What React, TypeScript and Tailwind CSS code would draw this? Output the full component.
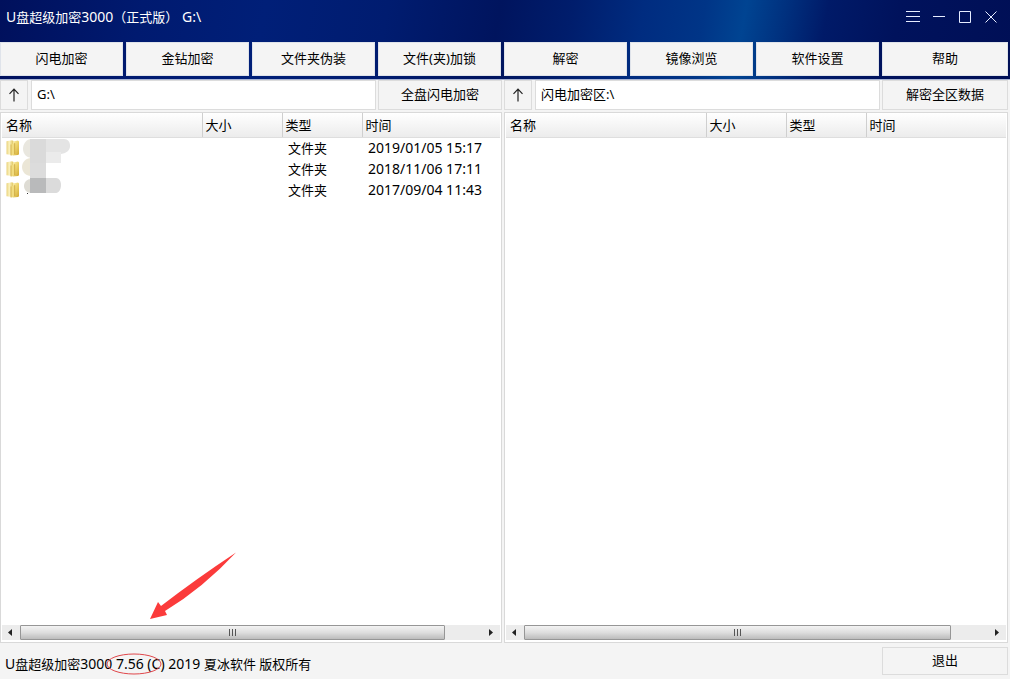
import type { ReactNode } from "react";

const tabs = ["闪电加密", "金钻加密", "文件夹伪装", "文件(夹)加锁", "解密", "镜像浏览", "软件设置", "帮助"];

const columns = ["名称", "大小", "类型", "时间"];

type FileRow = { id: number; type: string; time: string };

const files: FileRow[] = [
  { id: 1, type: "文件夹", time: "2019/01/05 15:17" },
  { id: 2, type: "文件夹", time: "2018/11/06 17:11" },
  { id: 3, type: "文件夹", time: "2017/09/04 11:43" },
];

function Latin({ children }: { children: ReactNode }) {
  return <span className="text-[14px]">{children}</span>;
}

function FolderIcon() {
  return (
    <svg width="14" height="16" viewBox="0 0 14 16" className="block" aria-hidden="true">
      <defs>
        <linearGradient id="folderBack" x1="0" x2="1" y1="0" y2="0">
          <stop offset="0" stopColor="#e9d27a" />
          <stop offset="0.4" stopColor="#fbf2bd" />
          <stop offset="1" stopColor="#dfc35a" />
        </linearGradient>
        <linearGradient id="folderFront" x1="0" x2="1" y1="0" y2="1">
          <stop offset="0" stopColor="#fbf0b0" />
          <stop offset="0.5" stopColor="#ecd268" />
          <stop offset="1" stopColor="#cfa632" />
        </linearGradient>
      </defs>
      <path d="M0.500 1.200 6 0.300 7.500 1v13l-1.500 1-5.500-.8z" fill="url(#folderBack)" />
      <path d="M7 1.500 12 0.600l1 .9v12.700l-1 .9-5.500.4z" fill="url(#folderFront)" />
      <path d="M5 4.500 8.500 3.200V14.200L5 15.600z" fill="#f1dc80" />
      <path d="M5 4.500v11" stroke="#c9a53c" strokeWidth="0.7" />
      <path d="M8.700 3.200v11" stroke="#c29a30" strokeWidth="0.7" />
    </svg>
  );
}

function NameMosaic() {
  return (
    <svg
      width="48"
      height="58"
      viewBox="0 0 48 58"
      className="pointer-events-none absolute top-[25px] left-5"
      aria-hidden="true"
    >
      <path d="M10 1C4 1 1 6 1 11s4 9 9 9z" fill="#e9e7df" />
      <path d="M9 20C4 20 0 24 0 29s4 9 9 9z" fill="#ebe6d6" />
      <path d="M9 41c-4 0-7 3-7 7s3 7 7 7z" fill="#dedcd4" />
      <rect x="8" y="1" width="16" height="24" fill="#dadada" />
      <path d="M24 1h18c4 0 6 3 6 7s-3 7-9 8H24z" fill="#e4e4e4" />
      <path d="M24 14h15v11H24z" fill="#ebebeb" />
      <rect x="8" y="25" width="16" height="16" fill="#dcdcdc" />
      <rect x="8" y="40" width="16" height="15" fill="#b9babb" />
      <path d="M24 40h10c3 0 5 3 5 7s-2 8-5 8H24z" fill="#dbdbdb" />
      <rect x="5" y="55" width="1" height="1" fill="#333" />
    </svg>
  );
}

function UpIcon() {
  return (
    <svg width="12" height="14" viewBox="0 0 12 14" fill="none" stroke="#222" strokeWidth="1.2" aria-hidden="true">
      <path d="M6 13.5V1.2M1.5 5.8 6 1.2l4.5 4.6" />
    </svg>
  );
}

function ScrollBar() {
  return (
    <div className="flex h-[15px] bg-[#ececec]">
      <button type="button" aria-label="向左滚动" className="flex w-[18px] items-center justify-center pr-[2px]">
        <svg width="4" height="7" viewBox="0 0 4 7" aria-hidden="true">
          <path d="M4 0v7L0 3.5z" fill="#222" />
        </svg>
      </button>
      <div className="flex-1">
        <div className="flex h-full w-[92%] items-center justify-center gap-[2px] rounded-[1px] border border-[#969696] bg-linear-to-b from-[#f3f3f3] via-[#dedede] to-[#bcbcbc] pb-px">
          <span className="h-[7px] w-px bg-[#555]" />
          <span className="h-[7px] w-px bg-[#555]" />
          <span className="h-[7px] w-px bg-[#555]" />
        </div>
      </div>
      <button type="button" aria-label="向右滚动" className="flex w-[18px] items-center justify-center">
        <svg width="4" height="7" viewBox="0 0 4 7" aria-hidden="true">
          <path d="M0 0v7l4-3.500z" fill="#222" />
        </svg>
      </button>
    </div>
  );
}

type PaneProps = { path: string; action: string; rows: FileRow[]; className?: string; actionClassName: string };

function Pane({ path, action, rows, className = "", actionClassName }: PaneProps) {
  return (
    <section className={`flex min-w-0 flex-col ${className}`}>
      <div className="flex h-[30px]">
        <button
          type="button"
          aria-label="上一级"
          className="mr-[3px] flex w-7 items-center justify-center border border-[#dcdcdc] bg-[#f4f4f4]"
        >
          <UpIcon />
        </button>
        <input
          aria-label="路径"
          defaultValue={path}
          className="mr-[2px] min-w-0 flex-1 border border-[#dcdcdc] bg-white px-[5px] pb-[2px] outline-none"
        />
        <button type="button" className={`border border-[#dcdcdc] bg-[#f4f4f4] pb-[2px] ${actionClassName}`}>
          {action}
        </button>
      </div>

      <div className="mt-[2px] flex flex-1 flex-col border border-[#d9d9d9] bg-white px-px pb-[2px]">
        <div className="relative flex-1">
          <table className="w-full table-fixed border-collapse text-left">
            <colgroup>
              <col className="w-[200px]" />
              <col className="w-20" />
              <col className="w-20" />
              <col />
            </colgroup>
            <thead>
              <tr className="h-6 bg-linear-to-b from-white to-[#ececec]">
                {columns.map((name) => (
                  <th
                    key={name}
                    className="border-r border-b border-r-[#cfcfcf] border-b-[#dedede] py-0 pr-0 pl-[3px] font-normal first:pl-1 last:border-r-0"
                  >
                    {name}
                  </th>
                ))}
              </tr>
            </thead>
            <tbody>
              {rows.map((row) => (
                <tr key={row.id} className="h-[21px]">
                  <td className="p-0 pl-1">
                    <FolderIcon />
                  </td>
                  <td className="p-0" />
                  <td className="p-0 pl-[6px]">{row.type}</td>
                  <td className="p-0 pl-[6px] text-[14px] whitespace-nowrap">{row.time}</td>
                </tr>
              ))}
            </tbody>
          </table>
          {rows.length > 0 && <NameMosaic />}
        </div>
        <ScrollBar />
      </div>
    </section>
  );
}

function WindowButtons() {
  const icons = [
    { label: "菜单", d: "M1 2.5h14M1 7.500h14M1 12.500h14" },
    { label: "最小化", d: "M2 7.500h12" },
    { label: "最大化", d: "M2.500 2.500h11v11h-11z" },
    { label: "关闭", d: "M2.500 2.500l11 11M13.500 2.500l-11 11" },
  ];
  return (
    <div className="flex gap-[10px]">
      {icons.map((icon) => (
        <button key={icon.label} type="button" aria-label={icon.label}>
          <svg width="16" height="16" viewBox="0 0 16 16" fill="none" stroke="#e6ecff" className="block">
            <path d={icon.d} />
          </svg>
        </button>
      ))}
    </div>
  );
}

function Annotations() {
  return (
    <svg
      width="240"
      height="130"
      viewBox="0 0 240 130"
      className="pointer-events-none absolute bottom-0 left-0"
      aria-hidden="true"
    >
      <path d="M236 3.500Q196 30 161 57l-3-4-8 17 17-4-2-4Q203 39 236 3.500z" fill="#fb3b3b" />
      <ellipse cx="134" cy="115" rx="27" ry="10" fill="none" stroke="#e0474b" />
    </svg>
  );
}

export default function App() {
  return (
    <div className="bg-white pr-[2px] font-['Noto_Sans','Noto_Sans_CJK_SC',sans-serif] text-[13px] leading-5 text-black">
      <div className="relative flex min-h-screen flex-col bg-[#f4f4f4]">
        <header className="bg-[linear-gradient(100deg,#00105c_0%,#001a70_14%,#001f78_26%,#001c70_38%,#00145e_49%,#001d6c_56%,#002c80_63%,#003587_69%,#004492_73%,#00307e_77%,#001a68_81%,#00125c_88%,#000f56_100%)] pr-[2px]">
          <div className="flex h-[42px] items-center justify-between pr-[9px] pb-2 pl-[6px] text-white">
            <h1 className="whitespace-pre">
              <Latin>U</Latin>盘超级加密<Latin>3000</Latin>（正式版）<Latin> G:\</Latin>
            </h1>
            <WindowButtons />
          </div>
          <nav className="grid grid-cols-8 pb-[3px]">
            {tabs.map((tab) => (
              <button
                key={tab}
                type="button"
                className="mr-[3px] h-[34px] border border-[#dfe3ea] bg-[#f4f4f4] pb-[2px] last:mr-0"
              >
                {tab}
              </button>
            ))}
          </nav>
        </header>

        <main className="grid flex-1 grid-cols-2 border-t border-[#a9b5d4] pr-[2px]">
          <Pane path="G:\" action="全盘闪电加密" rows={files} className="pr-[2px]" actionClassName="w-[124px]" />
          <Pane path="闪电加密区:\" action="解密全区数据" rows={[]} actionClassName="w-[126px]" />
        </main>

        <footer className="flex h-9 items-start justify-between pt-1 pr-[2px] pl-[5px]">
          <p className="pt-[7px] whitespace-pre">
            <Latin>U</Latin>盘超级加密<Latin>3000 7.56 (C) 2019 </Latin>夏冰软件 版权所有
          </p>
          <button type="button" className="h-7 w-[126px] border border-[#dcdcdc] bg-[#f4f4f4] pb-[2px]">
            退出
          </button>
        </footer>

        <Annotations />
      </div>
    </div>
  );
}
